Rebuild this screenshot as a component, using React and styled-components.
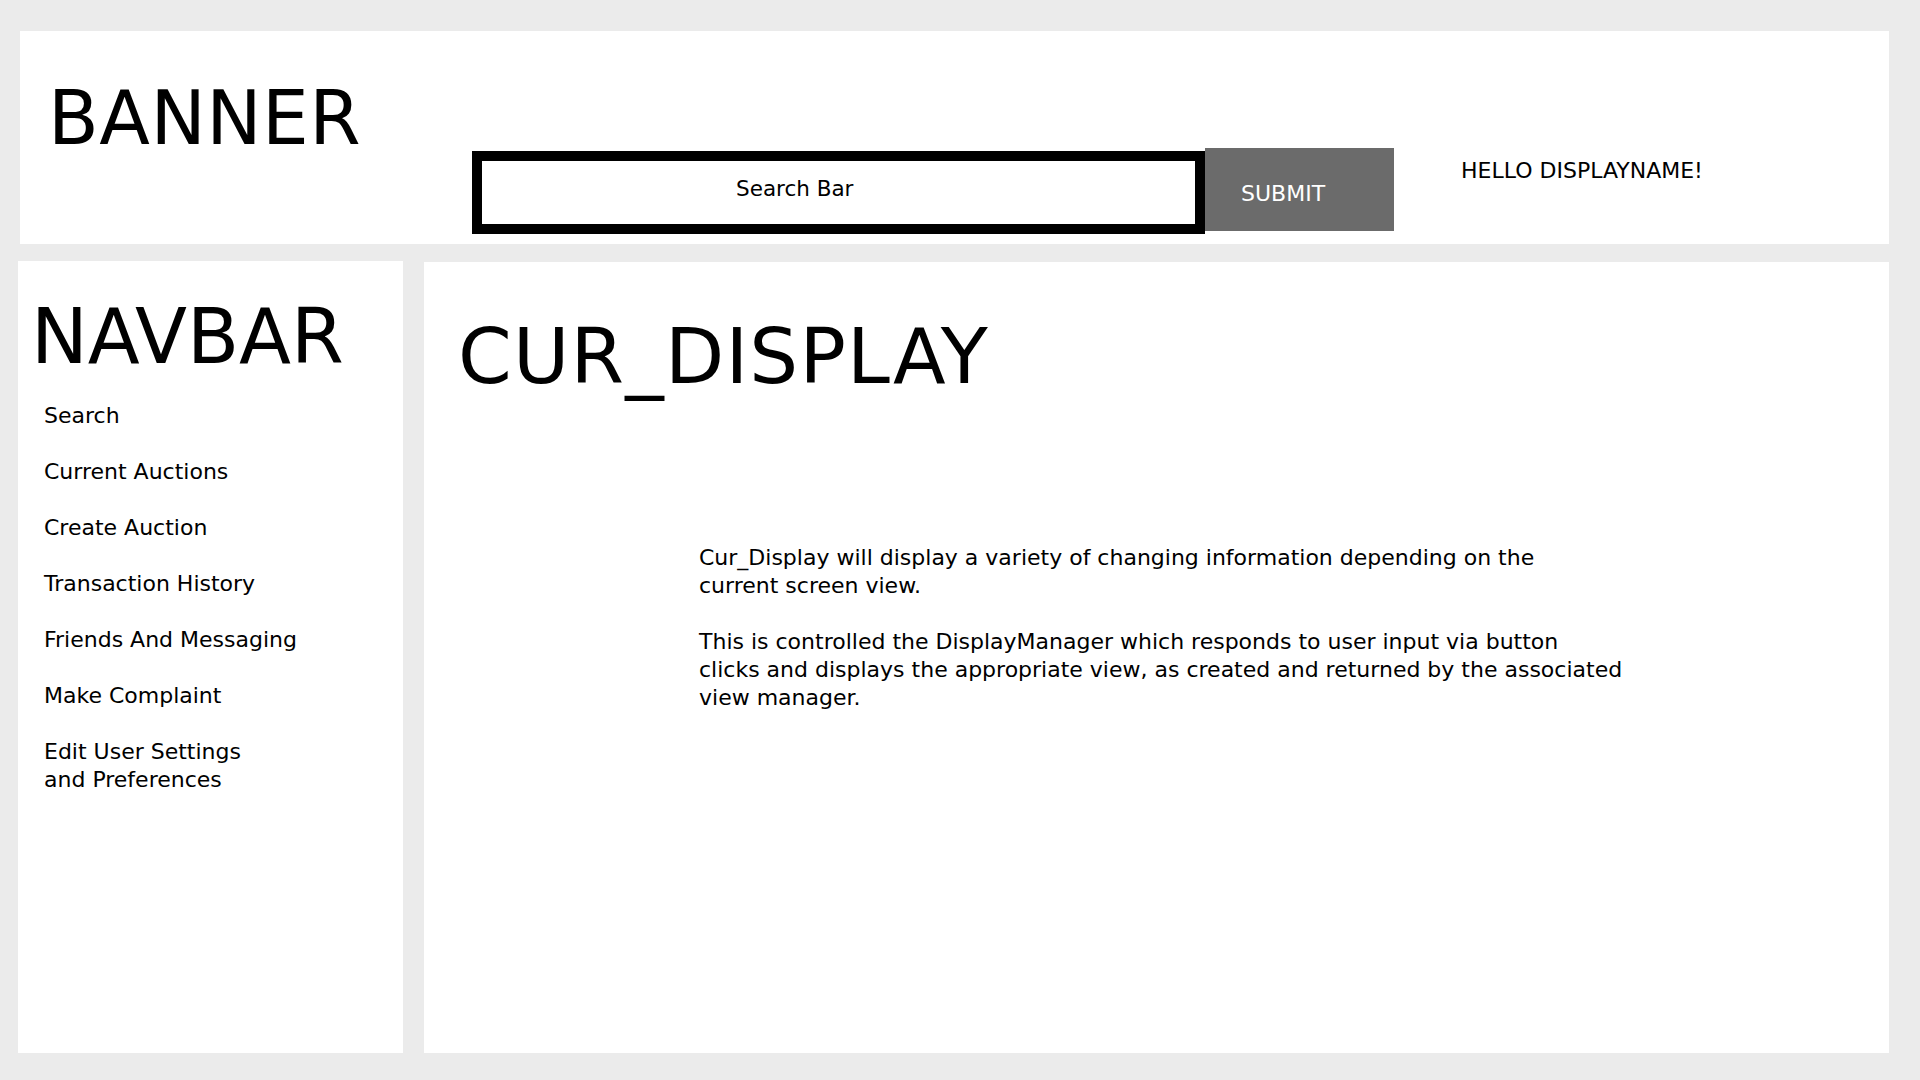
import React from "react";
import styled, { createGlobalStyle } from "styled-components";

const GlobalStyle = createGlobalStyle`
  html, body {
    margin: 0;
    padding: 0;
    background: #ebebeb;
  }
  body {
    font-family: "DejaVu Sans", Verdana, sans-serif;
    color: #000;
  }
`;

const Page = styled.div`
  width: 1920px;
  height: 1080px;
  box-sizing: border-box;
  padding: 31px 31px 27px 18px;
  display: flex;
  flex-direction: column;
  gap: 17px;
`;

const Banner = styled.header`
  height: 213px;
  margin-left: 2px;
  background: #fff;
  display: flex;
  align-items: flex-start;
  padding-left: 28px;
`;

const BigTitle = styled.h1`
  margin: ${(p) => p.$top}px 0 0;
  font-size: 74px;
  font-weight: normal;
  line-height: 1;
  letter-spacing: 0.5px;
  white-space: nowrap;
`;

const TitleSlot = styled.div`
  width: 424px;
  flex-shrink: 0;
`;

const SearchForm = styled.form`
  display: flex;
  align-items: flex-start;
  margin: 120px 0 0;
`;

const SearchField = styled.div`
  width: 733px;
  height: 83px;
  box-sizing: border-box;
  border: 10px solid #000;
  padding: 15px 0 0 254px;
  font-size: 21.5px;
  line-height: normal;
`;

const SubmitButton = styled.button`
  width: 189px;
  height: 83px;
  margin-top: -3px;
  border: none;
  background: #6b6b6b;
  color: #fff;
  font-family: "DejaVu Sans", Verdana, sans-serif;
  font-size: 22px;
  line-height: normal;
  text-align: left;
  padding: 33px 0 0 36px;
  display: flex;
  align-items: flex-start;
  box-sizing: border-box;
  cursor: pointer;
`;

const Greeting = styled.div`
  margin: 127px 0 0 67px;
  font-size: 22px;
  line-height: normal;
  white-space: nowrap;
`;

const Body = styled.div`
  flex: 1;
  display: flex;
  gap: 21px;
  min-height: 0;
`;

const Navbar = styled.nav`
  width: 385px;
  flex-shrink: 0;
  background: #fff;
  padding: 38px 0 0 13px;
  box-sizing: border-box;
`;

const NavTitle = styled.h2`
  margin: 0;
  font-size: 76px;
  font-weight: normal;
  line-height: 1;
`;

const NavList = styled.ul`
  list-style: none;
  margin: 27px 0 0 13px;
  padding: 0;
  display: flex;
  flex-direction: column;
  gap: 28px;
`;

const NavItem = styled.li`
  font-size: 22px;
  line-height: 28px;
  cursor: pointer;
`;

const Display = styled.main`
  flex: 1;
  margin-top: 1px;
  background: #fff;
  padding: 56px 0 0 34px;
  box-sizing: border-box;
`;

const DisplayTitle = styled.h2`
  margin: 0;
  font-size: 77px;
  font-weight: normal;
  line-height: 1;
  letter-spacing: 1.2px;
`;

const Blurb = styled.div`
  margin: 149px 0 0 241px;
  font-size: 22px;
  line-height: 28px;
  white-space: nowrap;
`;

const Para = styled.p`
  margin: 0 0 28px;
`;

const navItems = [
  "Search",
  "Current Auctions",
  "Create Auction",
  "Transaction History",
  "Friends And Messaging",
  "Make Complaint",
  ["Edit User Settings", "and Preferences"],
];

export default function App() {
  return (
    <>
      <GlobalStyle />
      <Page>
        <Banner>
          <TitleSlot>
            <BigTitle $top={50}>BANNER</BigTitle>
          </TitleSlot>
          <SearchForm onSubmit={(e) => e.preventDefault()}>
            <SearchField>Search Bar</SearchField>
            <SubmitButton type="submit">SUBMIT</SubmitButton>
          </SearchForm>
          <Greeting>HELLO DISPLAYNAME!</Greeting>
        </Banner>
        <Body>
          <Navbar>
            <NavTitle>NAVBAR</NavTitle>
            <NavList>
              {navItems.map((item) =>
                Array.isArray(item) ? (
                  <NavItem key={item[0]}>
                    {item[0]}
                    <br />
                    {item[1]}
                  </NavItem>
                ) : (
                  <NavItem key={item}>{item}</NavItem>
                )
              )}
            </NavList>
          </Navbar>
          <Display>
            <DisplayTitle>CUR_DISPLAY</DisplayTitle>
            <Blurb>
              <Para>
                Cur_Display will display a variety of changing information depending on the
                <br />
                current screen view.
              </Para>
              <Para>
                This is controlled the DisplayManager which responds to user input via button
                <br />
                clicks and displays the appropriate view, as created and returned by the associated
                <br />
                view manager.
              </Para>
            </Blurb>
          </Display>
        </Body>
      </Page>
    </>
  );
}
